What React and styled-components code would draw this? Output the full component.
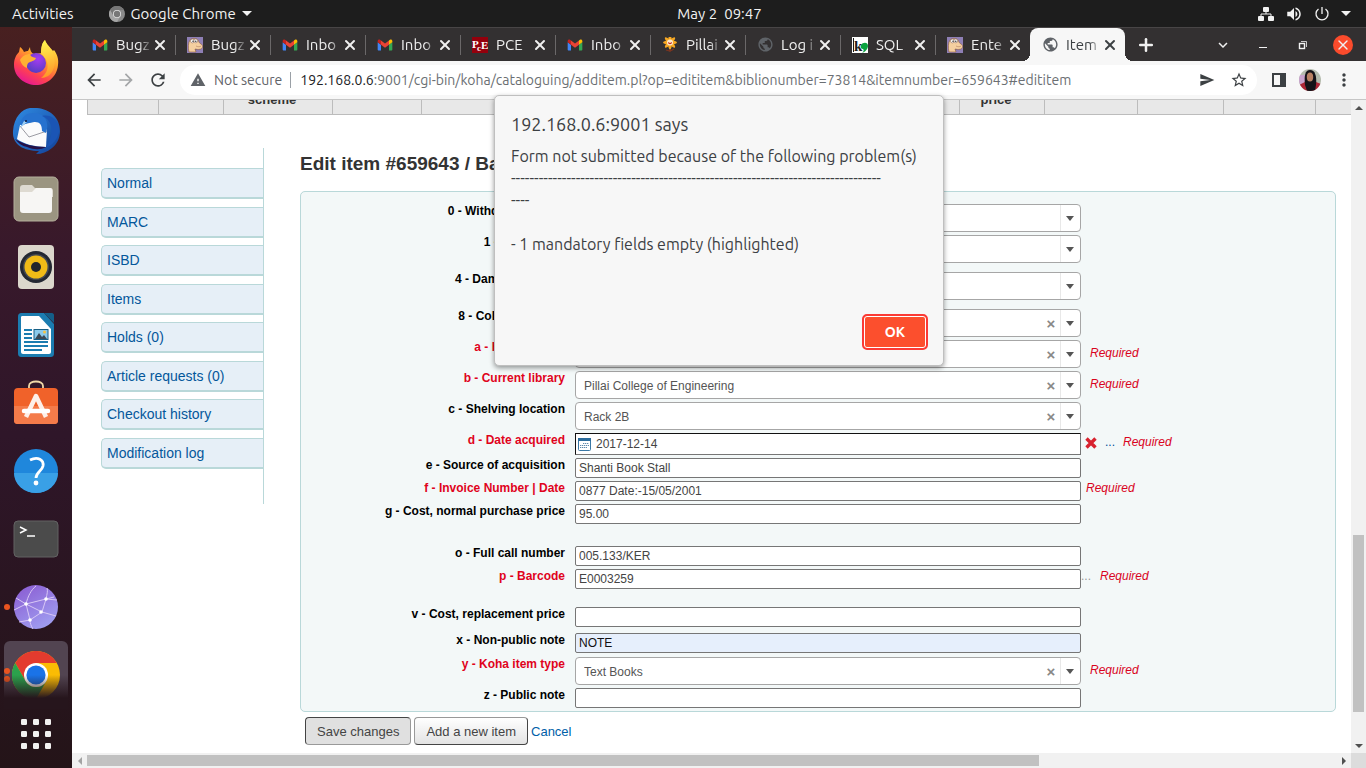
import React from 'react';
import styled, { createGlobalStyle, css } from 'styled-components';
import { Plus, X } from 'lucide-react';
import {
  MdArrowBack,
  MdArrowForward,
  MdRefresh,
  MdWarning,
  MdSend,
  MdStarBorder,
  MdMoreVert,
  MdPublic,
  MdKeyboardArrowDown,
  MdVolumeUp,
} from 'react-icons/md';

const TABS = [
  { icon: 'gmail', title: 'Bugz' },
  { icon: 'bugzilla', title: 'Bugz' },
  { icon: 'gmail', title: 'Inbo' },
  { icon: 'gmail', title: 'Inbo' },
  { icon: 'pce', title: 'PCE' },
  { icon: 'gmail', title: 'Inbo' },
  { icon: 'flower', title: 'Pillai' },
  { icon: 'globe', title: 'Log i' },
  { icon: 'koha', title: 'SQL' },
  { icon: 'bugzilla', title: 'Ente' },
  { icon: 'globe', title: 'Item', active: true },
];

const COLUMNS = [
  { width: 71 },
  { width: 65 },
  { width: 109, title: 'scheme' },
  { width: 89 },
  { width: 108 },
  { width: 108 },
  { width: 108 },
  { width: 107 },
  { width: 107 },
  { width: 85, title: 'price' },
  { width: 93 },
  { width: 86 },
  { width: 92 },
  {},
];

const MENU = ['Normal', 'MARC', 'ISBD', 'Items', 'Holds (0)', 'Article requests (0)', 'Checkout history', 'Modification log'];

const FIELDS = [
  { id: 'withdrawn', label: '0 - Withdrawn status', type: 'select', value: '' },
  { id: 'lost', label: '1 - Lost status', type: 'select', value: '' },
  { id: 'damaged', label: '4 - Damaged status', type: 'select', value: '', space: 6 },
  { id: 'collection', label: '8 - Collection code', type: 'select', value: 'Books', clear: true, space: 6 },
  { id: 'home', label: 'a - Home library', type: 'select', value: 'Pillai College of Engineering', clear: true, required: true },
  { id: 'current', label: 'b - Current library', type: 'select', value: 'Pillai College of Engineering', clear: true, required: true },
  { id: 'location', label: 'c - Shelving location', type: 'select', value: 'Rack 2B', clear: true },
  { id: 'acquired', label: 'd - Date acquired', type: 'date', value: '2017-12-14', required: true },
  { id: 'source', label: 'e - Source of acquisition', value: 'Shanti Book Stall' },
  { id: 'invoice', label: 'f - Invoice Number | Date', value: '0877 Date:-15/05/2001', required: true },
  { id: 'cost', label: 'g - Cost, normal purchase price', value: '95.00' },
  { id: 'callnumber', label: 'o - Full call number', value: '005.133/KER', space: 19 },
  { id: 'barcode', label: 'p - Barcode', value: 'E0003259', required: true, plugin: true },
  { id: 'replacement', label: 'v - Cost, replacement price', value: '', space: 15 },
  { id: 'nonpublic', label: 'x - Non-public note', value: 'NOTE', filled: true, space: 3 },
  { id: 'itemtype', label: 'y - Koha item type', type: 'select', value: 'Text Books', clear: true, required: true, space: 1 },
  { id: 'public', label: 'z - Public note', value: '' },
];

const DASHES = '-'.repeat(80);
const MESSAGE = `Form not submitted because of the following problem(s)\n${DASHES}\n----\n\n- 1 mandatory fields empty (highlighted)`;

const GmailIcon = () => (
  <svg width="16" height="16" viewBox="48 31 96 88">
    <path fill="#4285f4" d="M58 108h14V74L52 59v43c0 3.32 2.69 6 6 6" />
    <path fill="#34a853" d="M120 108h14c3.32 0 6-2.69 6-6V59l-20 15" />
    <path fill="#fbbc04" d="M120 48v26l20-15v-8c0-7.42-8.47-11.65-14.4-7.2" />
    <path fill="#ea4335" d="M72 74V48l24 18 24-18v26L96 92" />
    <path fill="#c5221f" d="M52 51v8l20 15V48l-5.6-4.2c-5.94-4.45-14.4-.22-14.4 7.2" />
  </svg>
);

const BugzillaIcon = () => (
  <svg width="16" height="16" viewBox="0 0 16 16">
    <rect width="16" height="16" fill="#8f7fb5" />
    <path d="M2 15C1 11 1 6 3 3c2-2 6-2 8 0 1 2 1 3 3 4 2 1 2 4 0 5-3 1-5 0-6 0l1 3z" fill="#f5cfa0" stroke="#8a5a3c" strokeWidth=".6" />
    <circle cx="5.4" cy="4" r="1.9" fill="#fff" stroke="#7b5548" strokeWidth=".5" />
    <circle cx="8.8" cy="3.9" r="1.9" fill="#fff" stroke="#7b5548" strokeWidth=".5" />
    <circle cx="6" cy="4.2" r=".7" fill="#222" />
    <circle cx="8.8" cy="4.2" r=".7" fill="#222" />
    <path d="M9 9c2 1 4 1 5 0" stroke="#a06a4c" strokeWidth=".5" fill="none" />
  </svg>
);

const PceIcon = () => (
  <svg width="16" height="16" viewBox="0 0 16 16">
    <rect width="16" height="16" fill="#94000c" />
    <text x="0" y="11" fontFamily="Liberation Serif, serif" fontWeight="bold" fontSize="11" fill="#fff">P</text>
    <text x="5" y="14" fontFamily="Liberation Serif, serif" fontWeight="bold" fontSize="9" fill="#fff">c</text>
    <text x="9" y="12" fontFamily="Liberation Serif, serif" fontWeight="bold" fontSize="11" fill="#fff">E</text>
  </svg>
);

const FlowerIcon = () => (
  <svg width="16" height="16" viewBox="0 0 16 16">
    <path d="M8 9v6M4 13l4 1 4-2" stroke="#7a3420" strokeWidth="1.2" fill="none" />
    <g fill="#f7a823">
      {[0, 45, 90, 135].map(angle => (
        <ellipse key={angle} cx="8" cy="5.5" rx="7" ry="2" transform={`rotate(${angle} 8 5.5)`} />
      ))}
    </g>
    <circle cx="8" cy="5.5" r="3" fill="#fde9c9" />
    <path d="M6 5c0 3 4 3 4 0l-2 1z" fill="#c22a22" />
  </svg>
);

const KohaIcon = () => (
  <svg width="16" height="16" viewBox="0 0 16 16">
    <rect width="16" height="16" fill="#fff" />
    <path d="M1 1h1v14H1z" fill="#1d1d1b" />
    <text x="2" y="14" fontFamily="Liberation Serif, serif" fontWeight="bold" fontSize="15" fill="#1d1d1b">k</text>
    <path d="M9 8c2-3 7-3 7 1 0 3-3 6-6 7 2-2 2-3 1-4-2 0-3-2-2-4z" fill="#0aa33f" />
  </svg>
);

const TAB_ICONS = {
  gmail: <GmailIcon />,
  bugzilla: <BugzillaIcon />,
  pce: <PceIcon />,
  flower: <FlowerIcon />,
  globe: <MdPublic size={17} color="#5f6368" />,
  koha: <KohaIcon />,
};

const FirefoxIcon = () => (
  <svg width="48" height="48" viewBox="0 0 48 48">
    <defs>
      <linearGradient id="ffBody" x1=".8" y1="0" x2=".25" y2="1">
        <stop offset="0" stopColor="#fff04a" />
        <stop offset=".4" stopColor="#ffa02a" />
        <stop offset=".72" stopColor="#ff4250" />
        <stop offset="1" stopColor="#e3139b" />
      </linearGradient>
      <linearGradient id="ffFlame" x1=".5" y1="0" x2=".6" y2="1">
        <stop offset="0" stopColor="#fff64f" />
        <stop offset="1" stopColor="#ff9226" />
      </linearGradient>
      <radialGradient id="ffGlobe" cx=".6" cy=".3" r=".8">
        <stop offset="0" stopColor="#a63cf0" />
        <stop offset="1" stopColor="#4d3dbd" />
      </radialGradient>
    </defs>
    <path d="M2 26c0-6 2-10 5-13l1-5c2 1 3 3 4 5 2-1 3-1 4-1l2-4c0 3 1 6 4 7l8-1c-1-5 0-10 3-13 1 4 5 7 8 11l1-1c3 4 5 9 4 15-1 12-11 20-22 20S2 38 2 26z" fill="url(#ffBody)" />
    <circle cx="24" cy="24" r="10" fill="url(#ffGlobe)" />
    <path d="M29 14c0-6 1-10 4-13 1 4 5 7 7 11 3 6 4 13 1 19-2 5-7 8-12 8 5-4 8-9 6-16-1-4-4-6-6-9z" fill="url(#ffFlame)" />
    <path d="M8 21c2-4 6-6 10-6 0 2 2 3 6 4-1 3-4 3-6 4-3 1-3 4-3 6-3-1-6-4-7-8z" fill="#ffb033" />
  </svg>
);

const ThunderbirdIcon = () => (
  <svg width="48" height="48" viewBox="0 0 48 48">
    <defs>
      <linearGradient id="tbBody" x1="0" y1="0" x2="1" y2="1">
        <stop offset="0" stopColor="#2f8ce4" />
        <stop offset="1" stopColor="#123f96" />
      </linearGradient>
    </defs>
    <path d="M1 24C2 10 10 2 18 1l7 0C38 2 48 11 48 24c0 7-3 13-8 17-5 4-10 6-16 6l3-3C12 44 0 38 1 24z" fill="url(#tbBody)" />
    <path d="M8 18l19-4 8 8-1 18c-10 0-23-3-29-8z" fill="#fbfbfc" />
    <path d="M8 19l9 11 18-6" stroke="#9b9ba3" strokeWidth="1" fill="none" />
    <path d="M3 32c8 5 18 8 31 8-5 3-12 3-19 0-5-1-9-4-12-8z" fill="#251046" />
    <path d="M8 17c2-8 7-11 14-11 11 0 16 10 12 20l-4-2c0-6-2-9-7-9-4 0-8 0-13 4z" fill="#2672cf" />
    <path d="M30 9c12 5 12 18 4 32 9-4 14-13 13-21C45 12 38 7 30 9z" fill="#1b55b5" />
    <path d="M12 14l-4 7 7-6z" fill="#9fd0f4" />
    <circle cx="14" cy="14" r="1" fill="#101a3a" />
  </svg>
);

const FilesIcon = () => (
  <svg width="46" height="46" viewBox="0 0 46 46">
    <rect x="1" y="1" width="44" height="44" rx="5" fill="#9b9581" stroke="#b4af9c" />
    <path d="M7 12c0-2 1-3 3-3h9l3 3h15c2 0 3 1 3 3v6H7z" fill="#dedad1" />
    <path d="M7 16h12l4-4h14c2 0 2 1 2 3v19c0 2-1 3-3 3H10c-2 0-3-1-3-3z" fill="#f7f6f4" />
  </svg>
);

const MusicIcon = () => (
  <svg width="38" height="46" viewBox="0 0 38 46">
    <rect x="1" y="1" width="36" height="44" rx="4" fill="#dbd7cc" />
    <circle cx="19" cy="23" r="16" fill="#232832" />
    <circle cx="19" cy="23" r="13" fill="#454a52" />
    <circle cx="19" cy="23" r="11.5" fill="#f0bb17" />
    <circle cx="19" cy="23" r="5" fill="#22262c" />
  </svg>
);

const WriterIcon = () => (
  <svg width="38" height="46" viewBox="0 0 38 46">
    <path d="M5 1h22l10 11v29c0 3-1 4-4 4H5c-3 0-4-1-4-4V5c0-3 1-4 4-4z" fill="#1b7cb0" />
    <path d="M27 1h8c1 0 2 1 2 2v8z" fill="#145e88" />
    <path d="M4 5c0-1 1-1 2-1h16l12 13v23c0 1-1 2-2 2H6c-1 0-2-1-2-2z" fill="#fff" />
    <path d="M7 18h8M7 22h8M7 26h8M7 30h24M7 34h24M7 38h18" stroke="#1b7cb0" strokeWidth="2" />
    <rect x="17" y="17.5" width="14" height="10" fill="#8ccbec" stroke="#185f85" />
    <path d="M18 27l4-6 3 4 2-2 3 4z" fill="#3b4956" />
    <circle cx="27.5" cy="20" r="1.5" fill="#f6c343" />
  </svg>
);

const SoftwareIcon = () => (
  <svg width="46" height="46" viewBox="0 0 46 46">
    <path d="M16 9V6c0-6 14-6 14 0v3" fill="none" stroke="#f1d9a8" strokeWidth="1.8" />
    <rect x="1" y="8" width="44" height="36" rx="4" fill="#f0622a" />
    <path d="M1 26h44v14c0 3-1 4-4 4H5c-3 0-4-1-4-4z" fill="#f47b4a" />
    <path d="M13 37l10-21 10 21" fill="none" stroke="#fdf0ea" strokeWidth="4.5" strokeLinejoin="round" />
    <path d="M11 31h24" stroke="#fff" strokeWidth="4.5" strokeLinecap="round" />
  </svg>
);

const HelpIcon = () => (
  <svg width="46" height="46" viewBox="0 0 46 46">
    <circle cx="23" cy="23" r="22" fill="#1f87dc" />
    <path d="M1 25a22 20 0 0 0 44 0z" fill="#39a0e6" />
    <path d="M17 12c8-4 14 0 13 6-1 5-7 6-7 12" fill="none" stroke="#fff" strokeWidth="2.8" />
    <circle cx="23" cy="35" r="2.4" fill="#fff" />
  </svg>
);

const TerminalIcon = () => (
  <svg width="46" height="38" viewBox="0 0 46 38">
    <rect x="1" y="1" width="44" height="36" rx="4" fill="#4b4b4b" stroke="#636363" />
    <path d="M7 7l6 3-6 3M14 16h8" fill="none" stroke="#fff" strokeWidth="1.5" />
  </svg>
);

const WebIcon = () => (
  <svg width="46" height="46" viewBox="0 0 46 46">
    <defs>
      <linearGradient id="webBg" x1="0" y1="0" x2=".6" y2="1">
        <stop offset="0" stopColor="#8958d0" />
        <stop offset="1" stopColor="#9f9cf0" />
      </linearGradient>
    </defs>
    <circle cx="23" cy="23" r="22" fill="url(#webBg)" />
    <path d="M3 14l10 6 20-5 11 1M13 20l16 8 14 4M13 20c2-8 5-14 10-18M13 20L1 26M13 20l4 16-11 2M17 36l12-8M17 36c0 3 1 6 3 9M29 28l4-13c1-5 2-8 1-11M33 15l8-2" fill="none" stroke="#d8c8f5" strokeWidth="1" />
    <g fill="#fff">
      <circle cx="13" cy="20" r="1.8" />
      <circle cx="33" cy="15" r="1.8" />
      <circle cx="28" cy="28" r="1.8" />
      <circle cx="17" cy="36" r="1.8" />
    </g>
  </svg>
);

const ChromeIcon = ({ size, mono }) => (
  <svg width={size} height={size} viewBox="0 0 48 48">
    <circle cx="24" cy="24" r="24" fill={mono ? '#8a8a8a' : '#fbbc04'} />
    <path d="M3.2 12A24 24 0 0 1 44.8 12H24L13.6 30z" fill={mono ? '#777' : '#e33b2e'} />
    <path d="M3.2 12A24 24 0 0 0 24 48l10.4-18A12 12 0 0 1 13.6 30z" fill={mono ? '#a5a5a5' : '#2ba24c'} />
    <circle cx="24" cy="24" r="12" fill={mono ? '#e4e4e4' : '#fff'} />
    <circle cx="24" cy="24" r="9.6" fill={mono ? '#777' : '#1a73e8'} />
  </svg>
);

const AppsIcon = () => (
  <svg width="32" height="32" viewBox="0 0 32 32" fill="#f2f1f0">
    {[1, 13, 25].map(y => [1, 13, 25].map(x => <rect key={`${x}-${y}`} x={x} y={y} width="6" height="6" rx="1.2" />))}
  </svg>
);

const NetworkIcon = () => (
  <svg width="16" height="16" viewBox="0 0 16 16" fill="#f2f2f2">
    <rect x="5" y="1" width="6" height="5" rx="1" />
    <rect x="0" y="10" width="6" height="5" rx="1" />
    <rect x="10" y="10" width="6" height="5" rx="1" />
    <path d="M3 10V8h10v2M8 5v3" fill="none" stroke="#f2f2f2" />
  </svg>
);

const PowerIcon = () => (
  <svg width="16" height="16" viewBox="0 0 16 16" fill="none" stroke="#f2f2f2" strokeWidth="1.3">
    <path d="M4.5 3A6 6 0 1 0 11.5 3M8 1v7" />
  </svg>
);

const RestoreIcon = () => (
  <svg width="10" height="10" viewBox="0 0 10 10" fill="none" stroke="#f2f2f2">
    <rect x="1.5" y="3.5" width="5" height="5" strokeWidth="1.4" />
    <path d="M3 1.5h5.5V7" strokeWidth=".8" />
  </svg>
);

const PanelIcon = () => (
  <svg width="14" height="14" viewBox="0 0 14 14">
    <path d="M0 0h14v14H0zM2 2v10h6V2z" fill="#3c4043" fillRule="evenodd" />
  </svg>
);

const AvatarIcon = () => (
  <svg width="22" height="22" viewBox="0 0 22 22">
    <defs>
      <clipPath id="avatarClip">
        <circle cx="11" cy="11" r="11" />
      </clipPath>
    </defs>
    <g clipPath="url(#avatarClip)">
      <rect width="22" height="22" fill="#b5bcae" />
      <path d="M0 6h6v9H0z" fill="#c9a4cd" />
      <path d="M0 16l6-3h11l5 2v7H0z" fill="#ad2636" />
      <path d="M6 16C5 7 6 1 11 1s7 6 6 15l-1 6H8z" fill="#151318" />
      <ellipse cx="11" cy="8" rx="3.2" ry="4.5" fill="#b98163" />
    </g>
  </svg>
);

const CalendarIcon = () => (
  <svg width="13" height="13" viewBox="0 0 13 13">
    <rect x=".5" y=".5" width="12" height="12" rx="1" fill="#fff" stroke="#3a78a5" />
    <path d="M0 0h13v3H0z" fill="#2b6c9c" />
    <path d="M5 5.5h6M2 7.5h9M2 9.5h7" stroke="#5d88aa" strokeWidth="1.2" strokeDasharray="1.3 .7" />
  </svg>
);

const ClearIcon = () => (
  <svg width="12" height="12" viewBox="0 0 12 12">
    <path d="M1.5 1.5l9 9M10.5 1.5l-9 9" stroke="#d8232f" strokeWidth="3.4" />
  </svg>
);

const DOCK = [
  { name: 'Firefox', icon: <FirefoxIcon /> },
  { name: 'Thunderbird', icon: <ThunderbirdIcon /> },
  { name: 'Files', icon: <FilesIcon /> },
  { name: 'Rhythmbox', icon: <MusicIcon /> },
  { name: 'Writer', icon: <WriterIcon /> },
  { name: 'Software', icon: <SoftwareIcon /> },
  { name: 'Help', icon: <HelpIcon /> },
  { name: 'Terminal', icon: <TerminalIcon /> },
  { name: 'Web', icon: <WebIcon />, windows: 1 },
  { name: 'Chrome', icon: <ChromeIcon size={48} />, windows: 2, active: true },
];

const ItemField = ({ field }) => {
  const { id, type, value, clear, filled } = field;
  if (type === 'select') {
    return (
      <SelectBox>
        <Select id={id} defaultValue={value}>
          <option value={value}>{value}</option>
        </Select>
        {clear && <SelectClear type="button" aria-label="Clear">×</SelectClear>}
        <SelectArrow>
          <Caret $color="#555" />
        </SelectArrow>
      </SelectBox>
    );
  }
  if (type === 'date') {
    return (
      <DateBox>
        <CalendarIcon />
        <DateInput id={id} defaultValue={value} />
      </DateBox>
    );
  }
  return <TextInput id={id} defaultValue={value} $filled={filled} />;
};

const FieldHints = ({ field }) => {
  const { type, required, plugin } = field;
  if (!required) {
    return <Hints />;
  }
  if (type === 'date') {
    return (
      <Hints $type={type}>
        <IconButton type="button" aria-label="Clear date"><ClearIcon /></IconButton>
        <PluginLink href="#acquired">...</PluginLink>
        <Required>Required</Required>
      </Hints>
    );
  }
  return (
    <Hints $type={plugin ? 'plugin' : type}>
      {plugin && <PluginLink href="#barcode" $disabled>...</PluginLink>}
      <Required>Required</Required>
    </Hints>
  );
};

const App = () => (
  <Desktop>
    <GlobalStyle />
    <TopBar>
      <TopLeft>
        <TopButton>Activities</TopButton>
        <TopButton>
          <ChromeIcon size={16} mono />
          Google Chrome
          <Caret $color="#f2f2f2" $large />
        </TopButton>
      </TopLeft>
      <Clock>
        <span>May 2</span>
        <span>09:47</span>
      </Clock>
      <TopRight>
        <NetworkIcon />
        <MdVolumeUp size={18} />
        <PowerIcon />
        <Caret $color="#f2f2f2" $large />
      </TopRight>
    </TopBar>
    <Workspace>
      <Dock>
        {DOCK.map(item => (
          <DockItem key={item.name} aria-label={item.name} $active={item.active}>
            {item.windows && (
              <Dots>
                {Array.from({ length: item.windows }, (_, i) => <Dot key={i} />)}
              </Dots>
            )}
            {item.icon}
          </DockItem>
        ))}
        <AppsButton aria-label="Show applications"><AppsIcon /></AppsButton>
      </Dock>
      <Browser>
        <TabStrip>
          {TABS.map((tab, index) => (
            <Tab key={index} $active={tab.active} $last={index >= TABS.length - 2}>
              <TabIcon>{TAB_ICONS[tab.icon]}</TabIcon>
              <TabTitle>{tab.title}</TabTitle>
              <IconButton aria-label="Close tab"><X size={16} strokeWidth={3} /></IconButton>
            </Tab>
          ))}
          <NewTab aria-label="New tab"><Plus size={20} strokeWidth={3} /></NewTab>
          <WindowControls>
            <ControlButton aria-label="Search tabs"><MdKeyboardArrowDown size={18} /></ControlButton>
            <ControlButton aria-label="Minimize"><MinimizeLine /></ControlButton>
            <ControlButton aria-label="Restore"><RestoreIcon /></ControlButton>
            <ControlButton aria-label="Close"><CloseCircle><X size={16} /></CloseCircle></ControlButton>
          </WindowControls>
        </TabStrip>
        <Toolbar>
          <NavButtons>
            <IconButton aria-label="Back"><MdArrowBack size={20} /></IconButton>
            <IconButton aria-label="Forward" $muted><MdArrowForward size={20} /></IconButton>
            <IconButton aria-label="Reload"><MdRefresh size={20} /></IconButton>
          </NavButtons>
          <AddressBar>
            <MdWarning size={16} />
            <Security>Not secure</Security>
            <Host>192.168.0.6</Host>
            <Address
              aria-label="Address"
              defaultValue=":9001/cgi-bin/koha/cataloguing/additem.pl?op=edititem&biblionumber=73814&itemnumber=659643#edititem"
            />
            <AddressActions>
              <IconButton aria-label="Share"><MdSend size={16} /></IconButton>
              <IconButton aria-label="Bookmark"><MdStarBorder size={18} /></IconButton>
            </AddressActions>
          </AddressBar>
          <ToolbarActions>
            <IconButton aria-label="Side panel"><PanelIcon /></IconButton>
            <IconButton aria-label="Profile"><AvatarIcon /></IconButton>
            <IconButton aria-label="Menu"><MdMoreVert size={20} /></IconButton>
          </ToolbarActions>
        </Toolbar>
        <Viewport>
          <Page>
            <TableClip>
              <ItemsTable>
                <colgroup>
                  {COLUMNS.map((column, index) => <Column key={index} $width={column.width} />)}
                </colgroup>
                <thead>
                  <tr>
                    {COLUMNS.map((column, index) => <HeadCell key={index}>{column.title}</HeadCell>)}
                  </tr>
                </thead>
              </ItemsTable>
            </TableClip>
            <Columns>
              <Menu>
                {MENU.map(name => <MenuLink key={name} href="#menu">{name}</MenuLink>)}
              </Menu>
              <Main>
                <Heading>Edit item #659643 / Barcode E0003259</Heading>
                <Fields>
                  {FIELDS.map(field => (
                    <Row key={field.id} $space={field.space}>
                      <Label htmlFor={field.id} $required={field.required}>{field.label}</Label>
                      <ItemField field={field} />
                      <FieldHints field={field} />
                    </Row>
                  ))}
                </Fields>
                <Actions>
                  <FormButton type="button" $pressed>Save changes</FormButton>
                  <FormButton type="button">Add a new item</FormButton>
                  <CancelLink href="#cancel">Cancel</CancelLink>
                </Actions>
              </Main>
            </Columns>
          </Page>
          <ScrollBar $vertical>
            <ScrollArrow $dir="up" />
            <Track $grow={420} />
            <Thumb $grow={177} />
            <Track $grow={26} />
            <ScrollArrow $dir="down" />
          </ScrollBar>
          <ScrollBar>
            <ScrollArrow $dir="left" $muted />
            <Thumb $grow={952} />
            <Track $grow={297} />
            <ScrollArrow $dir="right" />
          </ScrollBar>
          <Corner />
        </Viewport>
        <Dialog role="dialog" aria-labelledby="dialog-title">
          <DialogTitle id="dialog-title">192.168.0.6:9001 says</DialogTitle>
          <DialogText>{MESSAGE}</DialogText>
          <OkButton type="button">OK</OkButton>
        </Dialog>
      </Browser>
    </Workspace>
  </Desktop>
);

const GlobalStyle = createGlobalStyle`
  * {
    box-sizing: border-box;
  }
  body {
    margin: 0;
    overflow: hidden;
    font-family: Ubuntu, 'Noto Sans', sans-serif;
  }
  button, input, select {
    font-family: inherit;
    margin: 0;
  }
  svg {
    display: block;
    flex: none;
  }
`;

const plainButton = css`
  display: flex;
  align-items: center;
  justify-content: center;
  padding: 0;
  border: 0;
  background: none;
  color: inherit;
`;

const Desktop = styled.div`
  display: flex;
  flex-direction: column;
  height: 100vh;
  background-color: #241418;
`;

const TopBar = styled.header`
  display: flex;
  align-items: center;
  flex: none;
  height: 27px;
  padding: 0 15px 0 12px;
  background-color: #1d1d1d;
  color: #f2f2f2;
  font-size: 15px;
`;
const TopLeft = styled.div`
  display: flex;
  flex: 1;
  gap: 35px;
`;
const TopButton = styled.button`
  ${plainButton}
  gap: 6px;
  font-size: 15px;
  line-height: 20px;
`;
const Clock = styled.div`
  display: flex;
  gap: 7px;
  margin-left: 76px;
`;
const TopRight = styled.div`
  display: flex;
  flex: 1;
  align-items: center;
  justify-content: flex-end;
  gap: 11px;
`;
const Caret = styled.span`
  flex: none;
  border: ${({ $large }) => ($large ? 5 : 4)}px solid transparent;
  border-top: 5px solid ${({ $color }) => $color};
  border-bottom: 0;
`;

const Workspace = styled.div`
  display: flex;
  flex: 1;
  min-height: 0;
`;

const Dock = styled.nav`
  display: flex;
  flex-direction: column;
  flex: none;
  width: 72px;
  padding-top: 2px;
  background-image: linear-gradient(#482020, #38192b 30%, #2f1629 55%, #241418);
`;
const DockItem = styled.button`
  ${plainButton}
  position: relative;
  flex: none;
  height: 68px;
  margin: 0 4px;
  border-radius: 6px;
  ${({ $active }) => $active && css`
    background-color: #524451;
    &::after {
      content: '';
      position: absolute;
      inset: 0;
      background-image: linear-gradient(transparent 50%, #26151c 84%);
    }
  `}
`;
const Dots = styled.span`
  position: absolute;
  left: 0;
  display: flex;
  flex-direction: column;
  gap: 2px;
`;
const Dot = styled.span`
  width: 6px;
  height: 6px;
  border-radius: 50%;
  background-color: #e95420;
`;
const AppsButton = styled.button`
  ${plainButton}
  height: 50px;
`;

const Browser = styled.section`
  position: relative;
  display: flex;
  flex-direction: column;
  flex: 1;
  min-width: 0;
`;

const TabStrip = styled.div`
  display: flex;
  flex: none;
  height: 34px;
  padding-left: 8px;
  border-top: 1px solid #484546;
  background-color: #333031;
  color: #f0f0f0;
`;
const Tab = styled.div`
  position: relative;
  display: flex;
  align-items: center;
  flex: 0 1 95px;
  min-width: 0;
  padding: 0 7px 0 12px;
  ${({ $last }) => !$last && css`
    &::after {
      content: '';
      position: absolute;
      right: -1px;
      width: 1px;
      height: 20px;
      background-color: #6b6869;
    }
  `}
  ${({ $active }) => $active && css`
    border-radius: 8px 8px 0 0;
    background-color: #f7f7f7;
    color: #3c4043;
    &::before, &::after {
      content: '';
      position: absolute;
      bottom: 0;
      width: 8px;
      height: 8px;
    }
    &::before {
      left: -8px;
      background-image: radial-gradient(circle at 0 0, transparent 8px, #f7f7f7 8px);
    }
    &::after {
      right: -8px;
      background-image: radial-gradient(circle at 100% 0, transparent 8px, #f7f7f7 8px);
    }
  `}
`;
const TabIcon = styled.span`
  flex: none;
  width: 17px;
`;
const TabTitle = styled.span`
  flex: 1;
  min-width: 0;
  margin-left: 7px;
  overflow: hidden;
  font-size: 15px;
  line-height: 20px;
  white-space: nowrap;
  mask-image: linear-gradient(90deg, #000 65%, transparent);
`;
const IconButton = styled.button`
  ${plainButton}
  flex: none;
  ${({ $muted }) => $muted && 'color: #a4a6a8;'}
`;
const NewTab = styled.button`
  ${plainButton}
  width: 42px;
`;
const WindowControls = styled.div`
  display: flex;
  align-items: center;
  margin-left: auto;
  padding-right: 3px;
`;
const ControlButton = styled.button`
  ${plainButton}
  width: 40px;
  height: 33px;
`;
const MinimizeLine = styled.span`
  width: 8px;
  height: 1px;
  margin-top: 5px;
  background-color: #f2f2f2;
`;
const CloseCircle = styled.span`
  display: flex;
  align-items: center;
  justify-content: center;
  width: 20px;
  height: 20px;
  border-radius: 50%;
  background-color: #fb4b2c;
`;

const Toolbar = styled.div`
  display: flex;
  align-items: center;
  flex: none;
  height: 39px;
  border-bottom: 1px solid #c6c6c6;
  background-color: #f7f7f7;
  color: #3c4043;
`;
const NavButtons = styled.div`
  display: flex;
  gap: 12px;
  padding: 0 12px;
`;
const AddressBar = styled.div`
  display: flex;
  align-items: center;
  flex: 1;
  height: 30px;
  padding: 0 9px 0 10px;
  border-radius: 15px;
  background-color: #fff;
  color: #5f6368;
  font-size: 14px;
`;
const Security = styled.span`
  margin-left: 8px;
  padding-right: 8px;
  border-right: 1px solid #9aa0a6;
  line-height: 16px;
`;
const Host = styled.span`
  margin-left: 9px;
  color: #202124;
`;
const Address = styled.input`
  flex: 1;
  min-width: 0;
  padding: 0;
  border: 0;
  outline: none;
  background: none;
  color: #6b6f73;
  font-size: 14px;
`;
const AddressActions = styled.div`
  display: flex;
  align-items: center;
  gap: 15px;
  color: #3c4043;
`;
const ToolbarActions = styled.div`
  display: flex;
  align-items: center;
  gap: 13px;
  padding: 0 12px 0 15px;
`;

const Viewport = styled.div`
  display: grid;
  grid-template-columns: minmax(0, 1fr) 15px;
  grid-template-rows: minmax(0, 1fr) 15px;
  flex: 1;
  min-height: 0;
  background-color: #fff;
`;
const Page = styled.div`
  overflow: hidden;
  font-family: 'Liberation Sans', Arial, sans-serif;
`;

const TableClip = styled.div`
  display: flex;
  align-items: flex-end;
  height: 15px;
  margin-left: 15px;
  overflow: hidden;
`;
const ItemsTable = styled.table`
  flex: none;
  width: 100%;
  table-layout: fixed;
  border-collapse: collapse;
`;
const Column = styled.col`
  ${({ $width }) => $width && `width: ${$width}px;`}
`;
const HeadCell = styled.th`
  height: 30px;
  padding: 0 17px 6px 5px;
  border: 1px solid #bcbcbc;
  border-right: 0;
  background-color: #e8e8e8;
  color: #333;
  font-size: 13px;
  line-height: 16px;
  vertical-align: bottom;
`;

const Columns = styled.div`
  display: flex;
  align-items: flex-start;
  gap: 36px;
  margin-top: 33px;
  padding: 0 15px 0 29px;
`;
const Menu = styled.nav`
  display: flex;
  flex-direction: column;
  justify-content: space-between;
  flex: none;
  width: 163px;
  height: 356px;
  padding: 20px 0 35px;
  border-right: 1px solid #b9d8d9;
`;
const MenuLink = styled.a`
  height: 31px;
  padding: 0 5px;
  border: 1px solid #b9d8d9;
  border-right: 0;
  border-bottom-width: 2px;
  border-radius: 5px 0 0 5px;
  background-color: #e6eff7;
  color: #04579b;
  font-size: 14px;
  line-height: 29px;
  text-decoration: none;
`;

const Main = styled.main`
  flex: 1;
  min-width: 0;
`;
const Heading = styled.h2`
  margin: 0 0 11px;
  color: #333;
  font-size: 19px;
  line-height: 32px;
`;
const Fields = styled.fieldset`
  display: flex;
  flex-direction: column;
  gap: 3px;
  min-width: 0;
  margin: 0;
  padding: 12px 0 3px;
  border: 1px solid #b9d8d9;
  border-radius: 5px;
  background-color: #f3f8f8;
`;
const Row = styled.div`
  display: grid;
  grid-template-columns: 264px minmax(0, 506px) auto;
  justify-content: start;
  align-items: start;
  column-gap: 10px;
  margin-top: ${({ $space }) => $space || 0}px;
  font-size: 12px;
`;
const Label = styled.label`
  color: ${({ $required }) => ($required ? '#e0031c' : '#000')};
  font-weight: bold;
  font-size: 12px;
  line-height: 15px;
  text-align: right;
`;
const SelectBox = styled.div`
  display: flex;
  align-items: stretch;
  height: 28px;
  border: 1px solid #a6a6a6;
  border-radius: 4px;
  background-color: #fff;
`;
const Select = styled.select`
  flex: 1;
  min-width: 0;
  padding: 1px 8px 0;
  border: 0;
  outline: none;
  appearance: none;
  background: none;
  color: #555;
  font-size: 12px;
`;
const SelectClear = styled.button`
  ${plainButton}
  width: 18px;
  padding-top: 1px;
  color: #888;
  font-weight: bold;
  font-size: 15px;
`;
const SelectArrow = styled.span`
  display: flex;
  align-items: center;
  justify-content: center;
  width: 20px;
  padding-right: 1px;
  border-left: 1px solid #e8e8e8;
`;
const TextInput = styled.input`
  width: 100%;
  height: 20px;
  padding: 0 3px;
  border: 1px solid #767676;
  border-radius: 2px;
  outline: none;
  background-color: ${({ $filled }) => ($filled ? '#e6effc' : '#fff')};
  color: ${({ $filled }) => ($filled ? '#111' : '#444')};
  font-size: 12px;
`;
const DateBox = styled.div`
  display: flex;
  align-items: center;
  gap: 5px;
  height: 22px;
  padding: 0 2px;
  border: 1px solid #767676;
  border-top-color: #111;
  border-left-color: #111;
  background-color: #fff;
`;
const DateInput = styled.input`
  flex: 1;
  min-width: 0;
  padding: 0;
  border: 0;
  outline: none;
  color: #444;
  font-size: 12px;
`;
const HINT_SPACING = {
  select: 'padding: 6px 0 0; margin-left: -1px;',
  date: 'padding: 2px 0 0; margin-left: -6px; gap: 8px;',
  plugin: 'margin-left: -10px; gap: 9px;',
};
const Hints = styled.div`
  display: flex;
  align-items: center;
  margin-left: -5px;
  line-height: 15px;
  ${({ $type }) => HINT_SPACING[$type]}
`;
const Required = styled.span`
  color: #d9041e;
  font-style: italic;
`;
const PluginLink = styled.a`
  color: ${({ $disabled }) => ($disabled ? '#999' : '#004d99')};
  text-decoration: none;
`;

const Actions = styled.div`
  display: flex;
  align-items: center;
  gap: 3px;
  padding: 5px;
`;
const FormButton = styled.button`
  height: 28px;
  padding: 0 11px;
  border: 1px solid;
  border-color: ${({ $pressed }) => ($pressed ? '#444 #999 #999 #444' : '#999 #444 #444 #999')};
  border-radius: 4px;
  background-image: ${({ $pressed }) => ($pressed ? 'linear-gradient(#e0e0e0, #e0e0e0)' : 'linear-gradient(#fff, #e3e3e3)')};
  color: #444;
  font-size: 13px;
`;
const CancelLink = styled.a`
  color: #0060a8;
  font-size: 13px;
  text-decoration: none;
`;

const ScrollBar = styled.div`
  display: flex;
  flex-direction: ${({ $vertical }) => ($vertical ? 'column' : 'row')};
  padding: ${({ $vertical }) => ($vertical ? '0 2px' : '2px 0')};
  background-color: #f1f1f1;
`;
const Track = styled.div`
  flex: ${({ $grow }) => $grow};
`;
const Thumb = styled.div`
  flex: ${({ $grow }) => $grow};
  background-color: #c1c1c1;
`;
const ARROW_ANGLES = { up: 180, down: 0, left: 90, right: -90 };
const ScrollArrow = styled.span`
  display: flex;
  align-items: center;
  justify-content: center;
  flex: 0 0 15px;
  &::after {
    content: '';
    border: 4px solid transparent;
    border-top-color: ${({ $muted }) => ($muted ? '#a3a3a3' : '#505050')};
    border-bottom: 0;
    transform: rotate(${({ $dir }) => ARROW_ANGLES[$dir]}deg);
  }
`;
const Corner = styled.div`
  background-color: #dcdcdc;
`;

const Dialog = styled.div`
  position: absolute;
  top: 68px;
  left: 0;
  right: 0;
  display: flex;
  flex-direction: column;
  width: 450px;
  margin: 0 auto;
  padding: 16px 15px 15px 16px;
  border: 1px solid #bfbfbf;
  border-radius: 5px;
  background-color: #f7f7f7;
  box-shadow: 0 2px 5px rgba(0, 0, 0, 0.4);
  color: #3c4043;
`;
const DialogTitle = styled.h1`
  margin: 0 0 9px;
  font-weight: normal;
  font-size: 18px;
  line-height: 24px;
`;
const DialogText = styled.p`
  margin: 0;
  min-height: 169px;
  font-size: 16px;
  line-height: 22px;
  white-space: pre;
`;
const OkButton = styled.button`
  align-self: flex-end;
  width: 66px;
  height: 36px;
  border: 2px solid #fb3a35;
  border-radius: 5px;
  background-color: #fc4f2d;
  box-shadow: inset 0 0 0 1px #fff;
  color: #fff;
  font-weight: bold;
  font-size: 14px;
`;

export default App;
